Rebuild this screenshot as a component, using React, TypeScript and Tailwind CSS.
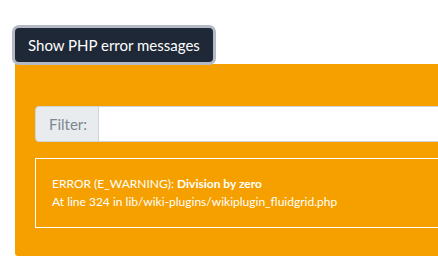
import React from 'react';

const App: React.FC = () => {
  return (
    <div className="w-[438px] h-[270px] overflow-hidden bg-white font-['Lato','Noto_Sans',sans-serif]">
      <div className="w-[700px] pt-[28px] pl-[15px]">
        <button className="relative z-10 h-[34px] px-[13px] rounded-[4px] bg-[#1e2836] text-white text-[15px] leading-none shadow-[0_0_0_3px_#b3bac6]">
          Show PHP error messages
        </button>
        <div className="mt-[2px] bg-[#f6a000] rounded-b-[3px] px-[20px] pt-[42px] pb-[28px]">
          <div className="flex h-[36px]">
            <span className="flex items-center w-[64px] pl-[13px] bg-[#e9ecef] border border-[#ced4da] rounded-l-[4px] text-[15px] text-[#7b8793]">
              Filter:
            </span>
            <input className="flex-1 bg-white border border-l-0 border-[#ced4da] outline-none" />
          </div>
          <div className="mt-[16px] border border-white px-[16px] py-[16px] text-white text-[12px] leading-[18px]">
            <div>
              ERROR (E_WARNING): <b className="font-bold">Division by zero</b>
            </div>
            <div>At line 324 in lib/wiki-plugins/wikiplugin_fluidgrid.php</div>
          </div>
        </div>
      </div>
    </div>
  );
};

export default App;
